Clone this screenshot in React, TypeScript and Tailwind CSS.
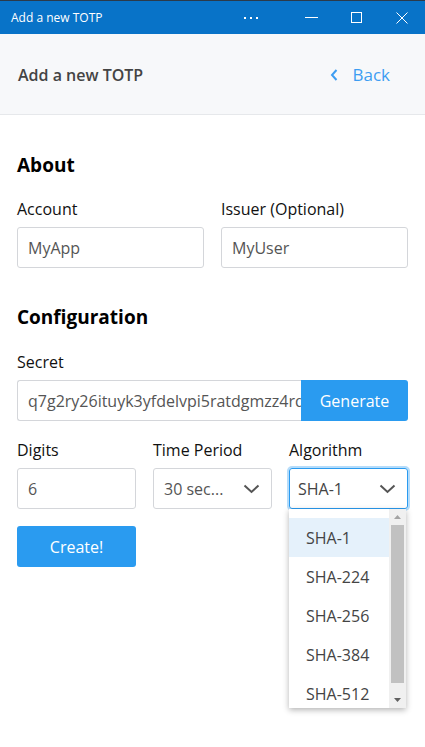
import { useState } from 'react';

const font = { fontFamily: '"Open Sans", "Noto Sans", sans-serif' };

const ChevronDown = () => (
  <svg width="17" height="10" viewBox="0 0 17 10" fill="none">
    <path d="M1.5 1.5 L8.5 8 L15.5 1.5" stroke="#555" strokeWidth="2" />
  </svg>
);

const TitleBar = () => (
  <div className="flex h-[34px] items-center border-t border-[#2b3a4a] bg-[#0873c8] text-white">
    <span className="pl-[11px] text-[12px]">Add a new TOTP</span>
    <div className="ml-auto flex h-full items-center pr-[17px]">
      <div className="flex items-center gap-[4px]">
        <span className="h-[2px] w-[2px] bg-white"></span>
        <span className="h-[2px] w-[2px] bg-white"></span>
        <span className="h-[2px] w-[2px] bg-white"></span>
      </div>
      <span className="ml-[47px] h-px w-[13px] bg-white"></span>
      <span className="ml-[33px] h-[11px] w-[11px] border border-white"></span>
      <svg width="12" height="12" viewBox="0 0 12 12" className="ml-[34px]">
        <path d="M0.5 0.5 L11.5 11.5 M11.5 0.5 L0.5 11.5" stroke="white" strokeWidth="1" />
      </svg>
    </div>
  </div>
);

const Label = ({ children }: { children: string }) => (
  <label className="mb-[7px] block text-[16px] leading-[22px] text-[#111]">{children}</label>
);

const Field = ({ label, value }: { label: string; value: string }) => (
  <div className="flex flex-col">
    <Label>{label}</Label>
    <div className="flex h-[41px] items-center rounded-[3px] border border-[#d4d6da] px-[10px] text-[16px] text-[#555]">
      {value}
    </div>
  </div>
);

const App = () => {
  const [algo] = useState('SHA-1');
  const options = ['SHA-1', 'SHA-224', 'SHA-256', 'SHA-384', 'SHA-512'];

  return (
    <div className="h-[747px] w-[425px] overflow-hidden bg-white" style={font}>
      <TitleBar />
      <div className="flex h-[81px] items-center border-b border-[#e6e8eb] bg-[#f7f8fa] px-[18px] pt-[2px]">
        <h1 className="text-[16px] font-semibold text-[#444]">Add a new TOTP</h1>
        <div className="ml-auto flex items-center pr-[17px] text-[17px] text-[#3d9df2]">
          <svg width="8" height="12" viewBox="0 0 8 12" className="mr-[14px]">
            <path d="M6.5 1 L2 6 L6.5 11" stroke="#3d9df2" strokeWidth="2" fill="none" />
          </svg>
          Back
        </div>
      </div>

      <div className="px-[17px] pt-[37px]">
        <h2 className="text-[19px] font-bold leading-[26px] text-black">About</h2>
        <div className="mt-[20px] grid grid-cols-2 gap-[17px]">
          <Field label="Account" value="MyApp" />
          <Field label="Issuer (Optional)" value="MyUser" />
        </div>

        <h2 className="mt-[36px] text-[19px] font-bold leading-[26px] text-black">Configuration</h2>
        <div className="mt-[21px]">
          <Label>Secret</Label>
        </div>
        <div className="flex h-[41px]">
          <div className="flex min-w-0 flex-1 items-center overflow-hidden whitespace-nowrap rounded-l-[3px] border border-r-0 border-[#d4d6da] px-[10px] text-[16px] text-[#555]">
            q7g2ry26ituyk3yfdelvpi5ratdgmzz4rq
          </div>
          <button className="w-[107px] rounded-r-[3px] bg-[#2a9bf0] text-[16px] text-white">Generate</button>
        </div>

        <div className="mt-[18px] grid grid-cols-3 gap-[17px]">
          <Field label="Digits" value="6" />
          <div className="flex flex-col">
            <Label>Time Period</Label>
            <div className="flex h-[41px] items-center justify-between rounded-[3px] border border-[#d4d6da] pl-[10px] pr-[11px] text-[16px] text-[#555]">
              <span>30 sec...</span>
              <ChevronDown />
            </div>
          </div>
          <div className="relative flex flex-col">
            <Label>Algorithm</Label>
            <div className="flex h-[41px] items-center justify-between rounded-[3px] border border-[#2a9bf0] pl-[8px] pr-[11px] text-[16px] text-[#444] shadow-[0_0_0_2px_rgba(42,155,240,0.35)]">
              <span>{algo}</span>
              <ChevronDown />
            </div>
            <div className="absolute top-[70px] left-0 z-10 flex h-[199px] w-[117px] bg-white shadow-[0_2px_6px_rgba(0,0,0,0.3)]">
              <div className="flex-1 pt-[9px]">
                {options.map((o) => (
                  <div
                    key={o}
                    className={`flex h-[39px] items-center pl-[17px] text-[16px] text-[#444] ${o === algo ? 'bg-[#e5f1fb]' : ''}`}
                  >
                    {o}
                  </div>
                ))}
              </div>
              <div className="flex w-[17px] flex-col items-center bg-[#f0f0f0]">
                <svg width="7" height="4" viewBox="0 0 7 4" className="mt-[6px]">
                  <path d="M0 4 L3.5 0 L7 4 Z" fill="#a3a3a3" />
                </svg>
                <div className="mt-[6px] h-[158px] w-[13px] bg-[#c1c1c1]"></div>
                <svg width="7" height="4" viewBox="0 0 7 4" className="mt-auto mb-[6px]">
                  <path d="M0 0 L3.5 4 L7 0 Z" fill="#606060" />
                </svg>
              </div>
            </div>
          </div>
        </div>

        <button className="mt-[17px] h-[41px] w-[119px] rounded-[3px] bg-[#2a9bf0] text-[16px] text-white">Create!</button>
      </div>
    </div>
  );
};

export default App;
